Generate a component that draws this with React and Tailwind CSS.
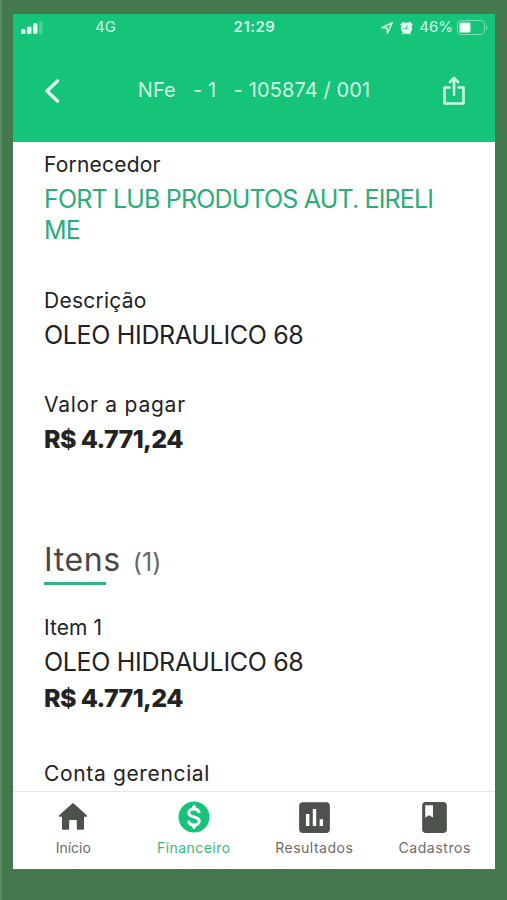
import { MdAssessment, MdBook } from "react-icons/md";

function HomeIcon() {
  return (
    <svg width="30" height="28" viewBox="0 0 30 28" fill="#4d524c">
      <path d="M14.200.600a1.300 1.300 0 0 1 1.600 0L28.800 12.300c.8.700.4 1.500-.6 1.500H26V25.500a1.300 1.300 0 0 1-1.300 1.300h-4.600a1.300 1.300 0 0 1-1.300-1.300v-8.500h-7.600v8.500a1.300 1.300 0 0 1-1.300 1.300H5.300A1.300 1.300 0 0 1 4 25.500V13.800H1.800c-1 0-1.400-.8-.6-1.500z" />
    </svg>
  );
}

function MoneyIcon() {
  return (
    <svg width="32" height="32" viewBox="0 0 32 32" fill="none">
      <circle cx="16" cy="16" r="15.500" fill="#15c379" />
      <path
        d="M21.300 12C20.800 9.200 18.900 8 16 8s-5.200 1.400-5.200 3.900c0 5.400 10.500 2.700 10.500 8.200 0 2.500-2.500 3.900-5.300 3.900s-5-1.400-5.400-4.300"
        stroke="#fff"
        strokeWidth="3"
      />
      <path d="M14 8V5.800L16 3.600l2 2.200V8zM14 24v2.200l2 2.200 2-2.200V24z" fill="#fff" />
    </svg>
  );
}

const tabs = [
  { label: "Início", icon: <HomeIcon />, tracking: "tracking-normal" },
  { label: "Financeiro", icon: <MoneyIcon />, tracking: "tracking-[0.45px]", active: true },
  { label: "Resultados", icon: <MdAssessment size={41} />, tracking: "tracking-[0.5px]" },
  { label: "Cadastros", icon: <MdBook size={37} />, tracking: "tracking-[0.6px]" },
];

function StatusBar() {
  return (
    <div className="grid h-[27px] grid-cols-3 items-center pl-2 pr-[7px] text-[15px] text-[#d3f9e5]">
      <div className="flex items-center">
        <svg width="22" height="13" viewBox="0 0 22 13" fill="#e4fff1">
          <rect x="0" y="8" width="4.500" height="5" rx="1.500" />
          <rect x="6" y="5.500" width="4.500" height="7.500" rx="1.500" />
          <rect x="12" y="2" width="4.500" height="11" rx="1.500" />
          <rect x="18" y="0" width="3.500" height="13" rx="1" opacity=".25" />
        </svg>
        <span className="ml-[52px]">4G</span>
      </div>
      <span className="text-center font-semibold tracking-[0.5px]">21:29</span>
      <div className="flex items-center justify-end">
        <svg width="12" height="12" viewBox="0 0 12 12" fill="none" stroke="#d3f9e5" strokeWidth="1.500" strokeLinejoin="round">
          <path d="M.8 5.700 11.200.8 6.500 11.200 6.200 6z" />
        </svg>
        <svg className="ml-[7px]" width="13" height="14" viewBox="0 0 13 14" fill="#e4fff1">
          <circle cx="6.500" cy="7.300" r="5.700" />
          <path d="M.2 3.500 3.200.4l1.600 1.400-3.200 3zM12.800 3.500 9.800.4 8.200 1.800l3.200 3zM1.600 13.700l1.500-2.200 1.400 1zM11.400 13.700l-1.500-2.200-1.400 1z" />
          <path d="M6.900 4.500v3.200H4.200" fill="none" stroke="#15c379" />
        </svg>
        <span className="ml-[6px]">46%</span>
        <svg className="ml-[4px]" width="31" height="15" viewBox="0 0 31 15">
          <rect x=".5" y=".5" width="27" height="14" rx="3.500" fill="none" stroke="#78dfb0" />
          <rect x="2.500" y="2.500" width="11" height="10" rx="1.500" fill="#f2fff8" />
          <path d="M29 5c2 .8 2 4.200 0 5z" fill="#78dfb0" />
        </svg>
      </div>
    </div>
  );
}

export default function App() {
  return (
    <div className="h-[900px] w-[507px] border-l-2 border-[#558b60] bg-[#44784d] pl-[11px] pt-[14px] font-['Inter',sans-serif]">
      <div className="flex h-[855px] w-[482px] flex-col bg-white text-[#222322]">
        <header className="h-[128px] shrink-0 bg-[#15c379]">
          <StatusBar />
          <div className="flex h-[99px] items-center justify-between pl-[31px] pr-[29px]">
            <svg width="16" height="26" viewBox="0 0 16 26" fill="none" stroke="#e4fff1" strokeWidth="3.400" strokeLinecap="round" strokeLinejoin="round">
              <path d="M13.500 3 3 13l10.500 10" />
            </svg>
            <h1 className="-mt-[2px] ml-[6px] whitespace-pre text-[20px] tracking-[0.12px] text-[#d3f9e5]">
              NFe   - 1   - 105874 / 001
            </h1>
            <svg width="24" height="30" viewBox="0 0 24 30" fill="none" stroke="#d3f9e5" strokeWidth="2.600" strokeLinejoin="round" strokeLinecap="round">
              <path d="M7.500 11.500h-5v16h19v-16h-5M12 19V3M8 6l4-4 4 4" />
            </svg>
          </div>
        </header>

        <main className="flex-1 overflow-hidden px-[31px] pt-[7px]">
          <p className="text-[21px] leading-8 tracking-[0.2px]">Fornecedor</p>
          <p className="mt-[3px] whitespace-nowrap text-[25px] leading-[31px] tracking-[-0.83px] text-[#2bad79]">
            FORT LUB PRODUTOS AUT. EIRELI
            <br />
            ME
          </p>

          <p className="mt-[39px] text-[21px] leading-8 tracking-[0.25px]">Descrição</p>
          <p className="text-[25px] leading-9 tracking-[-0.33px]">OLEO HIDRAULICO 68</p>

          <p className="mt-[36px] text-[21px] leading-8 tracking-[0.77px]">Valor a pagar</p>
          <p className="text-[25px] font-extrabold leading-9 tracking-[-0.6px]">R$ 4.771,24</p>

          <h2 className="mt-[81px] flex items-baseline text-[32px] leading-[44px] tracking-[0.6px] text-[#484848]">
            Itens <span className="ml-3 text-[25px] tracking-[0.1px] text-[#666]">(1)</span>
          </h2>
          <div className="-mt-[2px] h-[3px] w-[62px] bg-[#35b486]" />

          <p className="mt-[27px] text-[21px] leading-8 tracking-[0.05px]">Item 1</p>
          <p className="text-[25px] leading-9 tracking-[-0.33px]">OLEO HIDRAULICO 68</p>
          <p className="text-[25px] font-extrabold leading-9 tracking-[-0.6px]">R$ 4.771,24</p>

          <p className="mt-[42px] text-[21px] leading-8 tracking-[0.65px]">Conta gerencial</p>
        </main>

        <nav className="grid h-[78px] shrink-0 grid-cols-4 border-t border-[#e8e8e8]">
          {tabs.map((tab) => (
            <div
              key={tab.label}
              className={`flex flex-col items-center text-[14px] ${tab.active ? "text-[#35b981]" : "text-[#6b6c6b]"}`}
            >
              <div className="flex h-[50px] items-center text-[#4d524c]">{tab.icon}</div>
              <span className={`-mt-[5px] ${tab.tracking}`}>{tab.label}</span>
            </div>
          ))}
        </nav>
      </div>
    </div>
  );
}
